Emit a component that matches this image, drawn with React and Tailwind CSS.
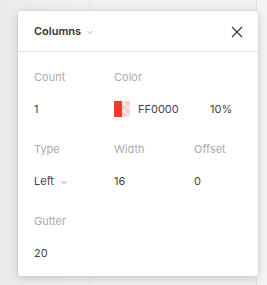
import React from 'react';

function Chevron({ className }) {
	return (
		<svg width="8" height="8" viewBox="0 0 8 8" className={className}>
			<path d="M1.5 3 L4 5.5 L6.5 3" fill="none" stroke="currentColor" strokeWidth="1" />
		</svg>
	);
}

function Swatch() {
	return (
		<div className="flex w-4 h-4">
			<div className="w-2 h-4 bg-[#ee3b2b]" />
			<div className="w-2 h-4 grid grid-cols-2 grid-rows-4">
				{[0, 1, 2, 3, 4, 5, 6, 7].map((i) => (
					<div
						key={i}
						className={(Math.floor(i / 2) + i) % 2 === 0 ? 'bg-[#fbe3e0]' : 'bg-[#f3d0cc]'}
					/>
				))}
			</div>
		</div>
	);
}

function Label({ children }) {
	return <div className="h-4 leading-4 mb-2 text-[#ababab]">{children}</div>;
}

function Value({ children }) {
	return <div className="h-8 flex items-center text-[#444]">{children}</div>;
}

export default function App() {
	return (
		<div className="relative w-[267px] h-[285px] overflow-hidden bg-[#efefef] font-['Inter',sans-serif] text-[11px]">
			{/* background canvas columns */}
			<div className="flex h-full">
				<div className="w-[90px] h-full border-r border-[#e2e2e2] bg-gradient-to-r from-[#ebebeb] to-[#f1f1f1]" />
				<div className="w-[167px] h-full border-r border-[#e2e2e2] bg-[#f0f0f0]" />
				<div className="flex-1 h-full bg-[#f4f4f4]" />
			</div>

			{/* popover */}
			<div className="absolute left-[18px] top-[11px] w-[240px] h-[265px] bg-white rounded-[2px] shadow-[0_2px_10px_rgba(0,0,0,0.18),0_0_0_0.5px_rgba(0,0,0,0.06)]">
				<div className="h-[41px] flex items-center justify-between pl-4 pr-[15px] pt-[1px] border-b border-[#e5e5e5]">
					<div className="flex items-center gap-[5px] font-semibold text-[#333]">
						Columns
						<Chevron className="text-[#b3b3b3] mt-[1px]" />
					</div>
					<svg width="12" height="12" viewBox="0 0 12 12">
						<path d="M1 1 L11 11 M11 1 L1 11" stroke="#333" strokeWidth="1.1" />
					</svg>
				</div>

				<div className="px-4 pt-[17px] grid grid-cols-[80px_80px_1fr]">
					<Label>Count</Label>
					<div className="col-span-2">
						<Label>Color</Label>
					</div>
					<Value>1</Value>
					<div className="col-span-2">
						<Value>
							<Swatch />
							<span className="ml-2 w-[72px]">FF0000</span>
							<span>10%</span>
						</Value>
					</div>

					<div className="mt-4"><Label>Type</Label></div>
					<div className="mt-4"><Label>Width</Label></div>
					<div className="mt-4"><Label>Offset</Label></div>
					<Value>
						Left
						<Chevron className="ml-[6px] text-[#999] mt-[1px]" />
					</Value>
					<Value>16</Value>
					<Value>0</Value>

					<div className="mt-4 col-span-3"><Label>Gutter</Label></div>
					<Value>20</Value>
				</div>
			</div>
		</div>
	);
}
